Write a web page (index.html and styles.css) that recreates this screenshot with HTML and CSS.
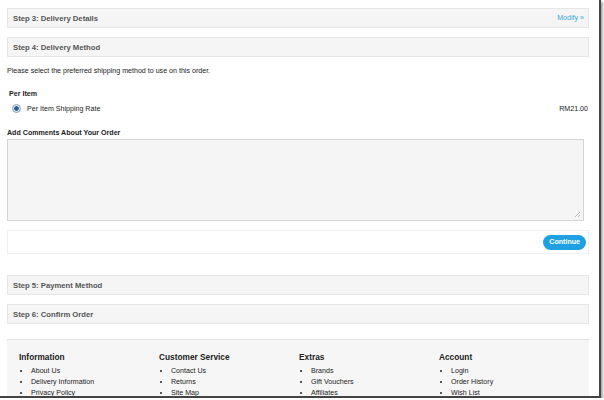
FILE: index.html
```html
<!DOCTYPE html>
<html lang="en">
<head>
<meta charset="UTF-8">
<title>Checkout</title>
<link rel="stylesheet" href="styles.css">
</head>
<body>
<div class="frame">
    <div class="checkout">
        <div class="panel">
            <div class="panel-heading">
                <span>Step 3: Delivery Details</span>
                <a class="modify" href="#">Modify &raquo;</a>
            </div>
        </div>

        <div class="panel">
            <div class="panel-heading"><span>Step 4: Delivery Method</span></div>
        </div>
        <div class="panel-body">
            <p class="intro">Please select the preferred shipping method to use on this order.</p>
            <p class="method-title">Per Item</p>
            <div class="method-row">
                <label><span class="radio"></span>Per Item Shipping Rate</label>
                <span class="price">RM21.00</span>
            </div>
            <p class="comment-title">Add Comments About Your Order</p>
            <div class="comment-box"><span class="grip"></span></div>
            <div class="buttons">
                <a class="btn" href="#">Continue</a>
            </div>
        </div>

        <div class="panel">
            <div class="panel-heading"><span>Step 5: Payment Method</span></div>
        </div>
        <div class="panel">
            <div class="panel-heading"><span>Step 6: Confirm Order</span></div>
        </div>

        <div class="footer">
            <div class="column">
                <h3>Information</h3>
                <ul>
                    <li>About Us</li>
                    <li>Delivery Information</li>
                    <li>Privacy Policy</li>
                </ul>
            </div>
            <div class="column">
                <h3>Customer Service</h3>
                <ul>
                    <li>Contact Us</li>
                    <li>Returns</li>
                    <li>Site Map</li>
                </ul>
            </div>
            <div class="column">
                <h3>Extras</h3>
                <ul>
                    <li>Brands</li>
                    <li>Gift Vouchers</li>
                    <li>Affiliates</li>
                </ul>
            </div>
            <div class="column">
                <h3>Account</h3>
                <ul>
                    <li>Login</li>
                    <li>Order History</li>
                    <li>Wish List</li>
                </ul>
            </div>
        </div>
    </div>
</div>
</body>
</html>
```

FILE: styles.css
```css
body {
    margin: 0;
    background: #ffffff;
    font-family: "Liberation Sans", Arial, sans-serif;
    font-size: 7.1px;
    color: #222;
}

.frame {
    width: 599px;
    height: 396px;
    overflow: hidden;
    background: #fff;
    border-right: 2px solid #444;
    border-bottom: 2px solid #444;
    box-shadow: 2px 2px 2px #aaa;
}

.checkout {
    padding: 8px 10px 0 7px;
}

.panel {
    border: 1px solid #e6e6e6;
    background: #f5f5f5;
    margin-bottom: 9px;
}

.panel-heading {
    display: flex;
    justify-content: space-between;
    align-items: center;
    height: 18px;
    padding: 0 4px 0 5px;
    font-size: 7.7px;
    font-weight: bold;
    color: #555;
}

.modify {
    font-weight: normal;
    color: #38a6dc;
    text-decoration: none;
    font-size: 7.1px;
}

.panel-body {
    padding: 0 0 21px 0;
}

.panel-body p {
    margin: 0;
    line-height: 11px;
}

.method-title {
    font-weight: bold;
    margin-top: 12px !important;
    padding-left: 2px;
}

.method-row {
    display: flex;
    justify-content: space-between;
    align-items: center;
    height: 11px;
    margin-top: 3px;
    padding-left: 5px;
    padding-right: 1px;
}

.method-row label {
    display: flex;
    align-items: center;
}

.radio {
    width: 7px;
    height: 7px;
    border-radius: 50%;
    border: 1px solid #8aa0b8;
    background: radial-gradient(circle, #2a5a94 0 2px, #dfe8f2 2.5px);
    margin-right: 6px;
}

.panel-body .comment-title {
    font-weight: bold;
    margin-top: 14px;
}

.comment-box {
    position: relative;
    width: 575px;
    height: 80px;
    border: 1px solid #d4d4d4;
    background: #f5f5f5;
}

.grip {
    position: absolute;
    right: 3px;
    bottom: 3px;
    width: 5px;
    height: 5px;
    background: linear-gradient(135deg, transparent 45%, #bbb 45%, #bbb 55%, transparent 55%, transparent 70%, #bbb 70%, #bbb 80%, transparent 80%);
}

.buttons {
    display: flex;
    justify-content: flex-end;
    align-items: center;
    height: 22px;
    margin-top: 9px;
    padding-right: 2px;
    border: 1px solid #f0f0f0;
}

.btn {
    background: #1fa0e2;
    color: #fff;
    font-weight: bold;
    text-decoration: none;
    padding: 0 6px;
    height: 15px;
    line-height: 15px;
    border-radius: 8px;
}

.footer {
    display: grid;
    grid-template-columns: repeat(4, 140px);
    margin-top: 15px;
    padding: 12px 12px 0;
    height: 60px;
    background: #f6f6f6;
    border-top: 1px solid #e3e3e3;
}

.footer h3 {
    margin: 0 0 4px;
    font-size: 8.3px;
    color: #222;
}

.footer ul {
    margin: 0;
    padding-left: 12px;
}

.footer li {
    line-height: 11px;
}
```
